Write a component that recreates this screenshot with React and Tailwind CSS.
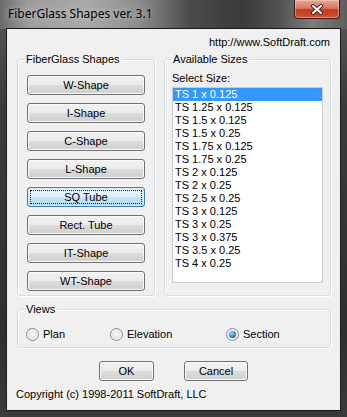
import React from "react"

const shapes = ["W-Shape", "I-Shape", "C-Shape", "L-Shape", "SQ Tube", "Rect. Tube", "IT-Shape", "WT-Shape"]

const sizes = [
  "TS 1 x 0.125",
  "TS 1.25 x 0.125",
  "TS 1.5 x 0.125",
  "TS 1.5 x 0.25",
  "TS 1.75 x 0.125",
  "TS 1.75 x 0.25",
  "TS 2 x 0.125",
  "TS 2 x 0.25",
  "TS 2.5 x 0.25",
  "TS 3 x 0.125",
  "TS 3 x 0.25",
  "TS 3 x 0.375",
  "TS 3.5 x 0.25",
  "TS 4 x 0.25",
]

const WinButton = ({ label, focused = false, className = "" }) => (
  <button
    className={`relative h-[20px] rounded-[3px] border text-center text-[11px] leading-[13px] ${
      focused
        ? "border-[#3c7fb1] bg-[linear-gradient(#ebf6fd,#ddf1fc_50%,#c3e6f9_50%,#b0dcf4)] shadow-[inset_0_0_0_1px_#d7ecf8]"
        : "border-[#707070] bg-[linear-gradient(#f2f2f2,#ebebeb_50%,#dddddd_50%,#cfcfcf)] shadow-[inset_0_0_0_1px_#fbfbfb]"
    } ${className}`}
  >
    {focused && <span className="absolute inset-[2px] border border-dotted border-[#222]" />}
    {label}
  </button>
)

const Radio = ({ label, checked = false, className = "" }) => (
  <div className={`flex items-center ${className}`}>
    <span className="flex h-[13px] w-[13px] items-center justify-center rounded-full border border-[#8a8b8c] bg-[radial-gradient(circle_at_50%_45%,#fafafa,#dcdcdc_70%,#cfcfcf)] shadow-[inset_0_0_0_1px_#f4f4f4]">
      {checked && (
        <span className="h-[7px] w-[7px] rounded-full bg-[radial-gradient(circle_at_40%_35%,#9fe0fb,#2a86c6_55%,#0f4f85)]" />
      )}
    </span>
    <span className="ml-[4px]">{label}</span>
  </div>
)

export default function App() {
  return (
    <div className="relative h-[417px] w-[347px] overflow-hidden bg-[linear-gradient(#5a5a5a,#3b3b3b_25%,#2f2f2f_80%,#3a3a3a)] font-['Liberation_Sans',Arial,sans-serif] text-[11px] leading-[13px] text-black">
      {/* Title bar */}
      <div className="flex h-[29px] items-start bg-[linear-gradient(to_right,#6a6a6a_0%,#9c9c9c_8%,#a9a9a9_25%,#8c8c8c_40%,#4a4a4a_55%,#3a3a3a_70%,#505050_80%,#7c7c7c_90%,#5e5e5e_100%)]">
        <span className="ml-[8px] mt-[6px] font-['Noto_Sans',sans-serif] text-[12px] leading-[16px] text-black [text-shadow:0_0_6px_#d8d8d8]">
          FiberGlass Shapes ver. 3.1
        </span>
        <div className="ml-auto mr-[7px] flex h-[19px] w-[46px] items-center justify-center rounded-b-[4px] border border-t-0 border-[#3b1510] bg-[linear-gradient(#e9a898,#d57a63_45%,#c13b1f_55%,#d0532f)] shadow-[inset_0_0_0_1px_rgba(255,210,200,0.5)]">
          <svg width="14" height="11" viewBox="0 0 14 11">
            <path d="M3 2 L11 9 M11 2 L3 9" stroke="#4a1a12" strokeWidth="4" strokeLinecap="round" />
            <path d="M3 2 L11 9 M11 2 L3 9" stroke="#ffffff" strokeWidth="2.2" strokeLinecap="round" />
          </svg>
        </div>
      </div>

      {/* Client area */}
      <div className="mx-[7px] flex h-[381px] flex-col border border-[#eeeeee] bg-[#f0f0f0] outline outline-1 outline-[#1c1c1c]">
        <div className="pr-[9px] pt-[6px] text-right">http://www.SoftDraft.com</div>

        <div className="ml-[9px] mt-[4px] flex gap-[9px]">
          <fieldset className="h-[243px] w-[138px] rounded-[3px] border border-[#d5dfe5] px-0 shadow-[inset_1px_1px_0_#fff,1px_1px_0_#fff]">
            <legend className="ml-[6px] px-[2px]">FiberGlass Shapes</legend>
            <div className="flex flex-col gap-[8px] pl-[9px] pt-[9px]">
              {shapes.map((s) => (
                <WinButton key={s} label={s} focused={s === "SQ Tube"} className="w-[118px]" />
              ))}
            </div>
          </fieldset>

          <fieldset className="h-[243px] w-[167px] rounded-[3px] border border-[#d5dfe5] px-0 shadow-[inset_1px_1px_0_#fff,1px_1px_0_#fff]">
            <legend className="ml-[6px] px-[2px]">Available Sizes</legend>
            <div className="pl-[7px] pt-[6px]">
              <div>Select Size:</div>
              <div className="mt-[2px] h-[196px] w-[151px] border border-[#c9cbd0] bg-white">
                {sizes.map((s, i) => (
                  <div
                    key={s}
                    className={`h-[13px] whitespace-nowrap pl-[2px] leading-[13px] ${
                      i === 0 ? "bg-[#3399ff] text-white" : ""
                    }`}
                  >
                    {s}
                  </div>
                ))}
              </div>
            </div>
          </fieldset>
        </div>

        <fieldset className="ml-[9px] mt-[7px] h-[45px] w-[314px] rounded-[3px] border border-[#d5dfe5] px-0 shadow-[inset_1px_1px_0_#fff,1px_1px_0_#fff]">
          <legend className="ml-[6px] px-[2px]">Views</legend>
          <div className="flex pl-[8px] pt-[12px]">
            <Radio label="Plan" className="w-[84px]" />
            <Radio label="Elevation" className="w-[116px]" />
            <Radio label="Section" checked />
          </div>
        </fieldset>

        <div className="mt-[13px] flex justify-center gap-[30px]">
          <WinButton label="OK" className="w-[55px]" />
          <WinButton label="Cancel" className="w-[64px]" />
        </div>

        <div className="mt-[7px] pl-[8px]">Copyright (c) 1998-2011 SoftDraft, LLC</div>
      </div>
    </div>
  )
}
